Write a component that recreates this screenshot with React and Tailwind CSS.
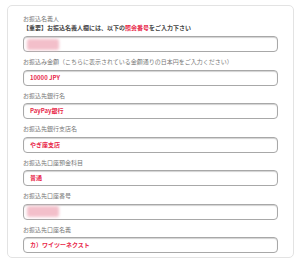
import React from "react";

const font = { fontFamily: '"Noto Sans CJK JP", "Noto Sans", sans-serif' };

function Input({ children }) {
  return (
    <div className="h-[16px] rounded-[4px] border border-[#a8a8a8] shadow-[inset_0_1px_1px_rgba(0,0,0,0.18)] bg-white flex items-center pl-[6px] text-[6px] font-bold text-[#e8284a] leading-none">
      {children}
    </div>
  );
}

function Blur() {
  return <div className="ml-[-3px] w-[32px] h-[11px] bg-[#f3bfca] blur-[1.5px] rounded-[2px]" />;
}

function Field({ label, children }) {
  return (
    <div className="flex flex-col">
      <div className="text-[6px] leading-[9px] text-[#777] mb-[3.5px]">{label}</div>
      <Input>{children}</Input>
    </div>
  );
}

export default function App() {
  return (
    <div className="w-[300px] h-[264px] bg-white pt-[5px] pl-[7px]" style={font}>
      <div className="w-[287px] h-[253px] border border-[#e3e3e3] rounded-[5px] pt-[8px] pl-[15px] pr-[15px] flex flex-col gap-[5px]">
        <div className="flex flex-col">
          <div className="text-[6px] leading-[9px] text-[#777]">お振込名義人</div>
          <div className="text-[6px] leading-[9px] text-[#444] font-bold mb-[4px]">
            【重要】お振込名義人欄には、以下の<span className="text-[#e8284a]">照会番号</span>をご入力下さい
          </div>
          <Input><Blur /></Input>
        </div>
        <Field label="お振込み金額（こちらに表示されている金額通りの日本円をご入力ください）">10000 JPY</Field>
        <Field label="お振込先銀行名">PayPay銀行</Field>
        <Field label="お振込先銀行支店名">やぎ座支店</Field>
        <Field label="お振込先口座預金科目">普通</Field>
        <Field label="お振込先口座番号"><Blur /></Field>
        <Field label="お振込先口座名義">カ）ワイツーネクスト</Field>
      </div>
    </div>
  );
}
